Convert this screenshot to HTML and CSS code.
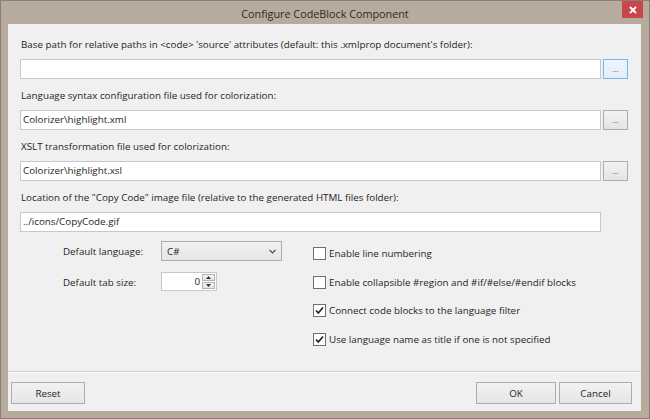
FILE: index.html
```html
<!DOCTYPE html>
<html>
<head>
<meta charset="utf-8">
<link rel="stylesheet" href="styles.css">
</head>
<body>
<div class="window">
  <div class="titlebar">
    <span></span>
    <div class="title">Configure CodeBlock Component</div>
    <div class="close">
      <svg width="8" height="8" viewBox="0 0 8 8"><path d="M1 1 L7 7 M7 1 L1 7" stroke="#fff" stroke-width="1.8"/></svg>
    </div>
  </div>
  <div class="client">
    <div class="content">
      <div class="field">
        <div class="label">Base path for relative paths in &lt;code&gt; 'source' attributes (default: this .xmlprop document's folder):</div>
        <div class="row"><div class="textbox"></div><button class="browse focus">...</button></div>
      </div>
      <div class="field">
        <div class="label">Language syntax configuration file used for colorization:</div>
        <div class="row"><div class="textbox">Colorizer\highlight.xml</div><button class="browse">...</button></div>
      </div>
      <div class="field">
        <div class="label">XSLT transformation file used for colorization:</div>
        <div class="row"><div class="textbox">Colorizer\highlight.xsl</div><button class="browse">...</button></div>
      </div>
      <div class="field">
        <div class="label">Location of the "Copy Code" image file (relative to the generated HTML files folder):</div>
        <div class="row"><div class="textbox">../icons/CopyCode.gif</div><span class="browse-space"></span></div>
      </div>
      <div class="options">
        <div class="settings">
          <span class="slabel">Default language:</span>
          <div class="combo"><span>C#</span>
            <svg width="7" height="5" viewBox="0 0 7 5"><path d="M0.5 0.8 L3.5 3.8 L6.5 0.8" fill="none" stroke="#444" stroke-width="1.2"/></svg>
          </div>
          <span class="slabel">Default tab size:</span>
          <div class="spin">
            <span class="spinval">0</span>
            <div class="spinbtns">
              <div class="sbtn"><svg width="5" height="3" viewBox="0 0 5 3"><path d="M0 3 L2.5 0 L5 3Z" fill="#333"/></svg></div>
              <div class="sbtn"><svg width="5" height="3" viewBox="0 0 5 3"><path d="M0 0 L2.5 3 L5 0Z" fill="#333"/></svg></div>
            </div>
          </div>
        </div>
        <div class="checks">
          <div class="check"><span class="box"></span><span>Enable line numbering</span></div>
          <div class="check"><span class="box"></span><span>Enable collapsible #region and #if/#else/#endif blocks</span></div>
          <div class="check"><span class="box"><svg width="11" height="11" viewBox="0 0 11 11"><path d="M2 5.5 L4.3 8 L9 2.5" fill="none" stroke="#222" stroke-width="1.7"/></svg></span><span>Connect code blocks to the language filter</span></div>
          <div class="check"><span class="box"><svg width="11" height="11" viewBox="0 0 11 11"><path d="M2 5.5 L4.3 8 L9 2.5" fill="none" stroke="#222" stroke-width="1.7"/></svg></span><span>Use language name as title if one is not specified</span></div>
        </div>
      </div>
    </div>
    <div class="buttonbar">
      <button class="btn reset">Reset</button>
      <span class="spacer"></span>
      <button class="btn ok">OK</button>
      <button class="btn cancel">Cancel</button>
    </div>
  </div>
</div>
</body>
</html>
```

FILE: styles.css
```css
html, body {
  margin: 0;
  padding: 0;
}
body {
  font-family: "Open Sans", "Noto Sans", sans-serif;
  font-size: 9.8px;
  color: #1e1e1e;
  background: #b6aa9c;
}
.window {
  width: 650px;
  height: 419px;
  box-sizing: border-box;
  background: #b7ab9e;
  border: 1px solid #8a7f75;
  display: flex;
  flex-direction: column;
}
.titlebar {
  height: 23px;
  display: grid;
  grid-template-columns: 1fr auto 1fr;
  align-items: center;
}
.title {
  font-size: 10.8px;
  color: #2e2a26;
  padding-top: 1px;
}
.close {
  justify-self: end;
  align-self: start;
  width: 21px;
  height: 17px;
  margin-right: 6px;
  background: #c8474d;
  display: flex;
  align-items: center;
  justify-content: center;
}
.client {
  flex: 1;
  margin: 0 8px 7px 7px;
  background: #f0f0f0;
  display: flex;
  flex-direction: column;
}
.content {
  flex: 1;
  padding: 13px 13px 0 12px;
}
.field {
  margin-bottom: 9px;
}
.label {
  height: 16px;
  line-height: 16px;
  padding-left: 1px;
  margin-bottom: 6px;
  white-space: nowrap;
}
.row {
  display: flex;
  gap: 2px;
  height: 20px;
}
.textbox {
  flex: 1;
  box-sizing: border-box;
  height: 20px;
  background: #fff;
  border: 1px solid #bfcad5;
  line-height: 18px;
  padding-left: 2px;
  white-space: nowrap;
}
.browse, .browse-space {
  width: 25px;
  height: 20px;
  box-sizing: border-box;
}
.browse {
  padding: 0;
  margin: 0;
  font-family: inherit;
  font-size: 8px;
  color: #555;
  line-height: 14px;
  border: 1px solid #adadad;
  background: linear-gradient(#f2f2f2, #e4e4e4);
}
.browse.focus {
  border-color: #7eb4ea;
  background: linear-gradient(#eef5fc, #e3eef9);
}
.options {
  display: flex;
  margin-top: 7px;
}
.settings {
  margin-left: 43px;
  display: grid;
  grid-template-columns: 98px 121px;
  row-gap: 11px;
  align-items: center;
  align-content: start;
}
.slabel {
  white-space: nowrap;
  padding-top: 1px;
}
.combo {
  height: 20px;
  box-sizing: border-box;
  border: 1px solid #acacac;
  background: linear-gradient(#f1f1f1, #e5e5e5);
  display: flex;
  align-items: center;
  justify-content: space-between;
  padding: 0 5px 0 5px;
}
.spin {
  width: 56px;
  height: 19px;
  box-sizing: border-box;
  border: 1px solid #bfcad5;
  background: #fff;
  display: flex;
  align-items: center;
}
.spinval {
  flex: 1;
  text-align: right;
  padding-right: 2px;
}
.spinbtns {
  width: 13px;
  height: 15px;
  margin-right: 1px;
  display: flex;
  flex-direction: column;
  gap: 1px;
}
.sbtn {
  flex: 1;
  box-sizing: border-box;
  border: 1px solid #b4b4b4;
  background: linear-gradient(#f3f3f3, #e3e3e3);
  display: flex;
  align-items: center;
  justify-content: center;
}
.checks {
  margin-left: 31px;
  padding-top: 4.5px;
  display: flex;
  flex-direction: column;
  gap: 12.5px;
}
.check {
  height: 16px;
  display: flex;
  align-items: center;
  gap: 3px;
  white-space: nowrap;
}
.box {
  width: 13px;
  height: 13px;
  box-sizing: border-box;
  border: 1px solid #707070;
  background: #fff;
  display: flex;
  align-items: center;
  justify-content: center;
}
.buttonbar {
  border-top: 1px solid #cdcdcd;
  box-shadow: inset 0 1px 0 #fbfbfb;
  padding: 10px 9px 7px 3px;
  display: flex;
  gap: 3px;
}
.spacer {
  flex: 1;
}
.btn {
  height: 22px;
  box-sizing: border-box;
  margin: 0;
  padding: 0;
  font-family: inherit;
  font-size: 9.8px;
  color: #1e1e1e;
  border: 1px solid #adadad;
  background: linear-gradient(#f2f2f2, #e5e5e5);
}
.reset { width: 74px; }
.ok { width: 80px; }
.cancel { width: 73px; }
```
